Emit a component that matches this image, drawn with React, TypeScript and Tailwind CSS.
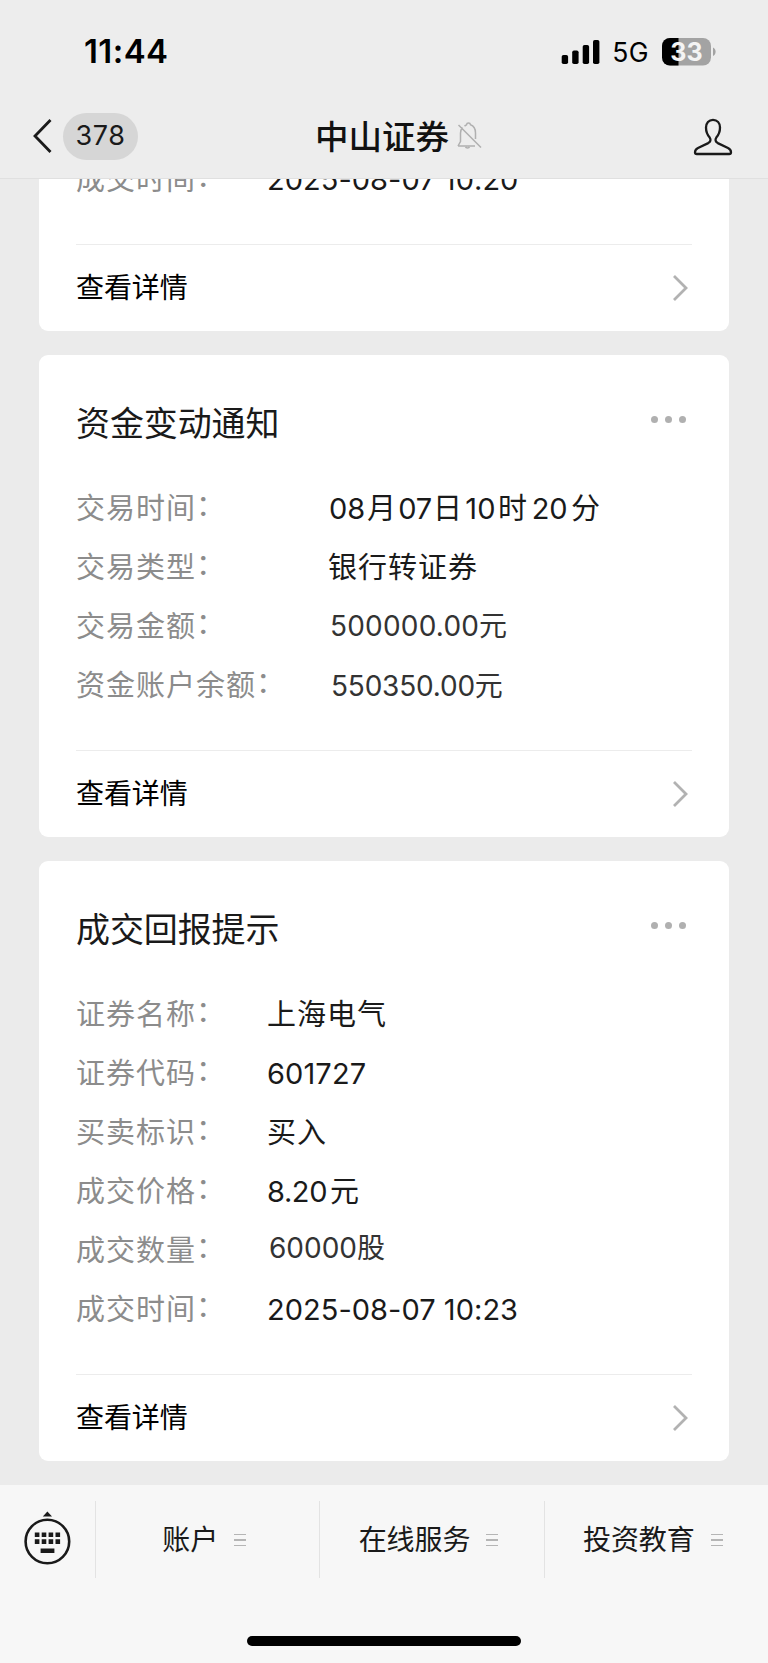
import type { ReactNode } from "react";

type Field = { label: string; value: ReactNode };

const date = (time: string) => <span className="tracking-[0.03px]">2025-08-07 {time}</span>;

const tradeTime = (
  <span className="flex">
    <span className="-ml-px w-[40px] text-center tracking-[-0.2px]">08</span>
    <span>月</span>
    <span className="w-[36px] text-center tracking-[-0.2px]">07</span>
    <span>日</span>
    <span className="w-[35px] text-center tracking-[0.2px]">10</span>
    <span>时</span>
    <span className="w-[43px] text-center tracking-[-0.2px]">20</span>
    <span>分</span>
  </span>
);

const fundFields: Field[] = [
  { label: "交易时间", value: tradeTime },
  { label: "交易类型", value: "银行转证券" },
  {
    label: "交易金额",
    value: <span className="mb-0.5 ml-0.5 text-[28px] tracking-[0.2px] text-[#333]">500000.00元</span>,
  },
  {
    label: "资金账户余额",
    value: <span className="mb-px ml-[3px] text-[28px] tracking-[-0.2px] text-[#333]">550350.00元</span>,
  },
];

const dealFields: Field[] = [
  { label: "证券名称", value: "上海电气" },
  { label: "证券代码", value: <span className="tracking-[0.1px]">601727</span> },
  { label: "买卖标识", value: "买入" },
  {
    label: "成交价格",
    value: (
      <span>
        <span className="mr-[3px] tracking-[-0.4px]">8.20</span>元
      </span>
    ),
  },
  {
    label: "成交数量",
    value: <span className="mb-1.5 ml-0.5 text-[28px] tracking-[0px] text-[#333]">60000股</span>,
  },
  { label: "成交时间", value: date("10:23") },
];

function Fields({ items, wide }: { items: Field[]; wide?: boolean }) {
  return (
    <dl className="text-[29px] tracking-[1px]">
      {items.map((f) => (
        <div key={f.label} className="flex h-[59px] items-center whitespace-nowrap">
          <dt className={`${wide ? "w-[252px]" : "w-[191px]"} flex shrink-0 pt-px text-[#8c8c8c]`}>
            {f.label}
            <span className="-mt-[3px]">：</span>
          </dt>
          <dd className="flex items-center pt-px text-[#1a1a1a]">{f.value}</dd>
        </div>
      ))}
    </dl>
  );
}

function Card({ title, items, wide }: { title?: string; items: Field[]; wide?: boolean }) {
  return (
    <section className="shrink-0 rounded-[9px] bg-white pr-[37px] pl-[37.500px]">
      {title && (
        <div className="flex h-[124px] items-start justify-between">
          <h2 className="pt-[43px] text-[34px] leading-[52px] tracking-[-0.1px] text-[#1a1a1a]">{title}</h2>
          <div className="flex gap-[7px] pt-[61px] pr-[6px]">
            <i className="size-[7px] rounded-full bg-[#b0b0b0]" />
            <i className="size-[7px] rounded-full bg-[#b0b0b0]" />
            <i className="size-[7px] rounded-full bg-[#b0b0b0]" />
          </div>
        </div>
      )}
      <Fields items={items} wide={wide} />
      <div className="mt-[35px] flex h-[87px] items-center justify-between border-t border-[#ececec]">
        <span className="text-[28px] tracking-[-0.1px] text-black">查看详情</span>
        <svg className="mr-px" width="20" height="28" viewBox="0 0 20 28" fill="none" stroke="#b2b2b2" strokeWidth="2.8">
          <path d="M3 2 15 14 3 26" />
        </svg>
      </div>
    </section>
  );
}

function MenuItem({ text }: { text: string }) {
  return (
    <button className="flex h-[77px] flex-1 items-center justify-center gap-4 border-l border-[#e3e3e3] pt-px pr-[7px] text-[28px] tracking-[-0.1px] text-[#1a1a1a]">
      {text}
      <span className="flex flex-col gap-1">
        <i className="h-[1.5px] w-3 bg-[#b5b5b5]" />
        <i className="h-[1.5px] w-3 bg-[#b5b5b5]" />
        <i className="h-[1.5px] w-3 bg-[#b5b5b5]" />
      </span>
    </button>
  );
}

export default function App() {
  return (
    <div className="flex h-[1663px] w-[768px] flex-col overflow-hidden bg-[#ebebeb] font-['Inter','Noto_Sans_CJK_SC',sans-serif]">
      <header className="h-[179px] shrink-0 border-b border-[#e0e0e0] bg-[#ededed]">
        <div className="flex h-[103px] items-center justify-between pr-[51px] pl-[84px]">
          <span className="text-[33px] font-semibold tracking-[0.4px] text-black">11:44</span>
          <div className="flex items-center">
            <svg width="39" height="26" viewBox="0 0 39 26">
              <rect x="0.700" y="16" width="6.400" height="9" rx="1.800" />
              <rect x="11.200" y="11.500" width="6.400" height="13.500" rx="1.800" />
              <rect x="21.700" y="6" width="6.400" height="19" rx="1.800" />
              <rect x="32" y="1" width="6.400" height="24" rx="1.800" />
            </svg>
            <span className="ml-3 pt-0.5 text-[26.500px] tracking-[0.4px] text-black">5G</span>
            <svg className="ml-[13px]" width="55" height="28" viewBox="0 0 55 28">
              <defs>
                <clipPath id="shell">
                  <rect width="49" height="27.500" rx="8" />
                </clipPath>
              </defs>
              <g clipPath="url(#shell)">
                <rect width="49" height="28" fill="#a3a3a3" />
                <rect width="16.500" height="28" fill="#000" />
              </g>
              <path d="M51 9.500c3.500 1.300 3.500 7.200 0 8.500z" fill="#a3a3a3" />
              <text x="24.500" y="22.800" textAnchor="middle" fontSize="25" fontWeight="700" fill="#f4f4f4">33</text>
            </svg>
          </div>
        </div>
        <div className="flex h-[66px] items-center">
          <svg className="ml-8" width="22" height="38" viewBox="0 0 22 38" fill="none" stroke="#1a1a1a" strokeWidth="2.800">
            <path d="M18.500 3 3 19l15.500 16" />
          </svg>
          <span className="ml-[9px] flex h-[47px] w-[75px] items-center justify-center rounded-full bg-[#d6d6d6] pt-px text-[27px] tracking-[0.5px] text-[#1a1a1a]">
            378
          </span>
          <h1 className="ml-[177px] pt-0.5 text-[33.500px] font-medium text-[#111]">中山证券</h1>
          <svg className="-mt-0.5 ml-2" width="26" height="28" viewBox="0 0 26 28" fill="none" stroke="#b0b0b0" strokeWidth="1.500">
            <path d="M1 25h17M1 25l2.500-4.500V12c0-2.500.7-4 2-5.500M7.500 5l2-1.200c.3-2.300 3.700-2.300 4 0 3.500 1.200 5 4.200 5 8.200v6M8.500 26c.5 1.300 3.500 1.300 4 0M1.500 4 24 26.500" />
          </svg>
          <svg className="mt-px mr-[35.500px] ml-auto" width="40" height="38" viewBox="0 0 40 38" fill="none" stroke="#1a1a1a" strokeWidth="2.300" strokeLinejoin="round">
            <path d="M20 1.800c-4.200 0-7 3.200-7 7.800 0 4 1.300 7.300 3.700 10 1.500 2.200.8 4.200-1.500 5.500L5 30c-2 1-3 2.500-3 4.200 0 1.200.6 1.800 1.800 1.800h32.400c1.200 0 1.800-.6 1.800-1.800 0-1.700-1-3.200-3-4.200l-10.200-4.900c-2.300-1.300-3-3.300-1.500-5.500 2.400-2.700 3.700-6 3.700-10 0-4.600-2.800-7.800-7-7.800z" />
          </svg>
        </div>
      </header>

      <main className="flex h-[1306px] shrink-0 flex-col justify-end gap-6 overflow-hidden pr-[39px] pb-6 pl-[38.500px]">
        <Card items={[{ label: "成交时间", value: date("10:20") }]} />
        <Card title="资金变动通知" items={fundFields} wide />
        <Card title="成交回报提示" items={dealFields} />
      </main>

      <footer className="flex flex-1 flex-col items-center justify-between bg-[#f7f7f7] pt-4 pb-[17px]">
        <div className="flex w-full">
          <div className="flex w-[95px] items-center pb-[3px] pl-6">
            <svg width="47" height="54" viewBox="0 0 47 54">
              <path d="M23.400.500 28 5.500h-9.200z" fill="#1a1a1a" />
              <circle cx="23.400" cy="30.500" r="21.800" fill="none" stroke="#1a1a1a" strokeWidth="2.600" />
              <path
                d="M10.800 21.500h4.600v4.600h-4.600zM17.700 21.500h4.600v4.600h-4.600zM24.600 21.500h4.600v4.600h-4.600zM31.500 21.500h4.600v4.600h-4.600zM10.800 28.300h4.600v4.600h-4.600zM17.700 28.300h4.600v4.600h-4.600zM24.600 28.300h4.600v4.600h-4.600zM31.500 28.300h4.600v4.600h-4.600zM16.600 37.400h13.800v4.600H16.600z"
                fill="#1a1a1a"
              />
            </svg>
          </div>
          <MenuItem text="账户" />
          <MenuItem text="在线服务" />
          <MenuItem text="投资教育" />
        </div>
        <div className="h-[10px] w-[274px] rounded-full bg-black" />
      </footer>
    </div>
  );
}
